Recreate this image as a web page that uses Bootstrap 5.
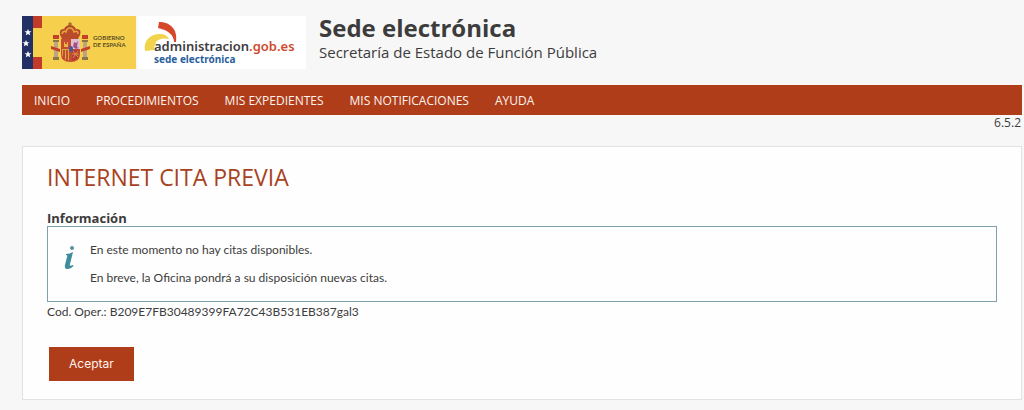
<!DOCTYPE html>
<html lang="es">
<head>
<meta charset="utf-8">
<meta name="viewport" content="width=device-width, initial-scale=1">
<title>Sede electrónica - Internet cita previa</title>
<link href="https://cdn.jsdelivr.net/npm/bootstrap@5.3.0/dist/css/bootstrap.min.css" rel="stylesheet">
<style>
  :root { --sede-red: #b03d1a; --sede-ink: #3c3c3c; }
  body { background: #f7f7f7; color: var(--sede-ink); font-family: "Open Sans", "Noto Sans", sans-serif; font-size: 12px; line-height: 16px; }
  .page { padding: 15px 2px 10px 22px; }
  .masthead { height: 55px; margin-bottom: 15px; }
  .masthead h1 { font-size: 24px; line-height: 26px; font-weight: 700; }
  .masthead p { font-size: 15px; line-height: 22px; }
  .masthead-title { margin-left: 13px; }
  .menu-bar { background: var(--sede-red); }
  .menu-bar .nav { padding: 0 12px; gap: 26px; }
  .menu-bar .nav-link { color: #fdf3ee; font-size: 12px; line-height: 16px; padding: 8px 0 6px; font-weight: 500; }
  .version { margin-bottom: 15px; padding-right: 1px; }
  .panel { background: #fefefe; border: 1px solid #e2e2e2; border-radius: 0; padding: 16px 24px 18px; }
  .panel h2 { color: #a8421f; font-size: 23px; line-height: 28px; font-weight: 500; margin-bottom: 20px; }
  .panel h3 { font-size: 13px; line-height: 15px; font-weight: 700; }
  .notice { border: 1px solid #7f9fb2; padding: 15px 16px; gap: 14px; }
  .notice p { font-family: Lato, sans-serif; font-size: 12px; line-height: 16px; margin-bottom: 12px; }
  .code { font-family: Lato, sans-serif; font-size: 12px; line-height: 20px; }
  .btn-sede { background: var(--sede-red); color: #fdf3ee; border-radius: 0; border: 0; padding: 9px 20px; font: 12px/16px Inter, sans-serif; margin: 25px 2px 0; }
  .btn-sede:hover { background: #8f3013; color: #fff; }
</style>
</head>
<body>
<div class="page">
  <header class="masthead d-flex">
    <svg class="flex-shrink-0" width="115" height="55" viewBox="0 0 115 55" role="img" aria-label="Gobierno de España">
      <rect y="1" width="114" height="53" fill="#f6d04d"/>
      <rect y="1" width="11" height="53" fill="#233066"/>
      <path d="M11 1h9v12h-9zM11 42h9v12h-9z" fill="#c23a2a"/>
      <g fill="#fff"><path id="st" d="M6 14l1 2.200 2.500.1-2 1.500.7 2.400L6 18.900l-2.200 1.300.7-2.400-2-1.500 2.500-.1z"/><use href="#st" y="11" x="-2"/><use href="#st" y="22"/></g>
      <path d="M32 27h4v17h-4zM61 27h4v17h-4z" fill="#b9a582"/>
      <path d="M31 25h6v2h-6zM60 25h6v2h-6zM31 42h6v3h-6zM60 42h6v3h-6z" fill="#8c7648"/>
      <path d="M29 31l9 3v3l-9-3zM59 34l9-3v3l-9 3zM31 20h6v4h-6zM60 20h6v4h-6z" fill="#c3402b"/>
      <path d="M38 20q-1-7 4-6 2-4 6-4t6 4q6-1 4 6l-2 4H40z" fill="#b94a2a"/>
      <path d="M40 19q1-4 4-2 1-4 4-4t4 4q4-2 4 2" fill="none" stroke="#e4a73e" stroke-width="1.500"/>
      <path d="M48 7v5M46 9h4" stroke="#8a5826"/>
      <path d="M39 24h19v15q0 8-9.500 8T39 39z" fill="#c54b32"/>
      <path d="M49 24h9v10h-9z" fill="#e2c0cb"/>
      <path d="M51 32l1-5 2 1 2-2-1 6 2 1-3 1z" fill="#a45085"/>
      <path d="M42 32v-5h1v2h2v-2h1v5z" fill="#e9b24b"/>
      <path d="M40 34h9v12q-9-1-9-8z" fill="#dfa647"/>
      <path d="M42 35v9M45 35v11M48 35v11" stroke="#b8352b" stroke-width="1.500"/>
      <path d="M50 35h7v5q-1 4-7 6z" fill="#b83832"/>
      <path d="M51 36l5 6M56 36l-5 7M50 39h7" stroke="#d49a48"/>
      <ellipse cx="49" cy="34" rx="2" ry="3" fill="#4a5899"/>
      <g font-family="Lato, sans-serif" font-size="6" font-weight="700" fill="#5c4e25"><text x="71" y="25">GOBIERNO</text><text x="71" y="32">DE ESPAÑA</text></g>
    </svg>
    <svg class="flex-shrink-0" width="169" height="55" viewBox="0 0 169 55" role="img" aria-label="administracion.gob.es sede electrónica">
      <path d="M1 1h168v53H1z" fill="#fff"/>
      <path d="M8 36C6 25 14 18 25 19q5 1 7 5-9-2-13 3-2 4-2 8z" fill="#f1d34c"/>
      <path d="M22 7c11 0 19 7 17 20h-2c0-7-6-12-16-14z" fill="#d5482c"/>
      <text x="17" y="36" font-family="'Noto Sans', sans-serif" font-size="13" font-weight="600" fill="#3d3d3f">administracion<tspan fill="#cf4b2d">.gob.es</tspan></text>
      <text x="17" y="48" font-family="'Noto Sans', sans-serif" font-size="10" font-weight="700" fill="#2a5f9e">sede electrónica</text>
    </svg>
    <div class="masthead-title">
      <h1 class="mb-0">Sede electrónica</h1>
      <p class="mb-0">Secretaría de Estado de Función Pública</p>
    </div>
  </header>
  <nav class="menu-bar" aria-label="Principal">
    <ul class="nav">
      <li class="nav-item"><a class="nav-link" href="#">INICIO</a></li>
      <li class="nav-item"><a class="nav-link" href="#">PROCEDIMIENTOS</a></li>
      <li class="nav-item"><a class="nav-link" href="#">MIS EXPEDIENTES</a></li>
      <li class="nav-item"><a class="nav-link" href="#">MIS NOTIFICACIONES</a></li>
      <li class="nav-item"><a class="nav-link" href="#">AYUDA</a></li>
    </ul>
  </nav>
  <div class="version text-end">6.5.2</div>
  <main class="panel">
    <h2>INTERNET CITA PREVIA</h2>
    <h3 class="mb-0">Información</h3>
    <div class="notice d-flex">
      <svg class="flex-shrink-0" width="12" height="30" viewBox="0 0 12 30" aria-hidden="true">
        <circle cx="8" cy="6" r="2" fill="#5b8f9a"/>
        <path d="M2 12q4 0 7-2L6 22q-1 3 3 1l.5 1Q7 27 4 27q-4 0-3-4l2-8q1-2-1-2z" fill="#3f8d9b"/>
      </svg>
      <div>
        <p>En este momento no hay citas disponibles.</p>
        <p class="mb-0">En breve, la Oficina pondrá a su disposición nuevas citas.</p>
      </div>
    </div>
    <div class="code">Cod. Oper.: B209E7FB30489399FA72C43B531EB387gal3</div>
    <button type="button" class="btn btn-sede">Aceptar</button>
  </main>
</div>
<script src="https://cdn.jsdelivr.net/npm/bootstrap@5.3.0/dist/js/bootstrap.bundle.min.js"></script>
</body>
</html>
